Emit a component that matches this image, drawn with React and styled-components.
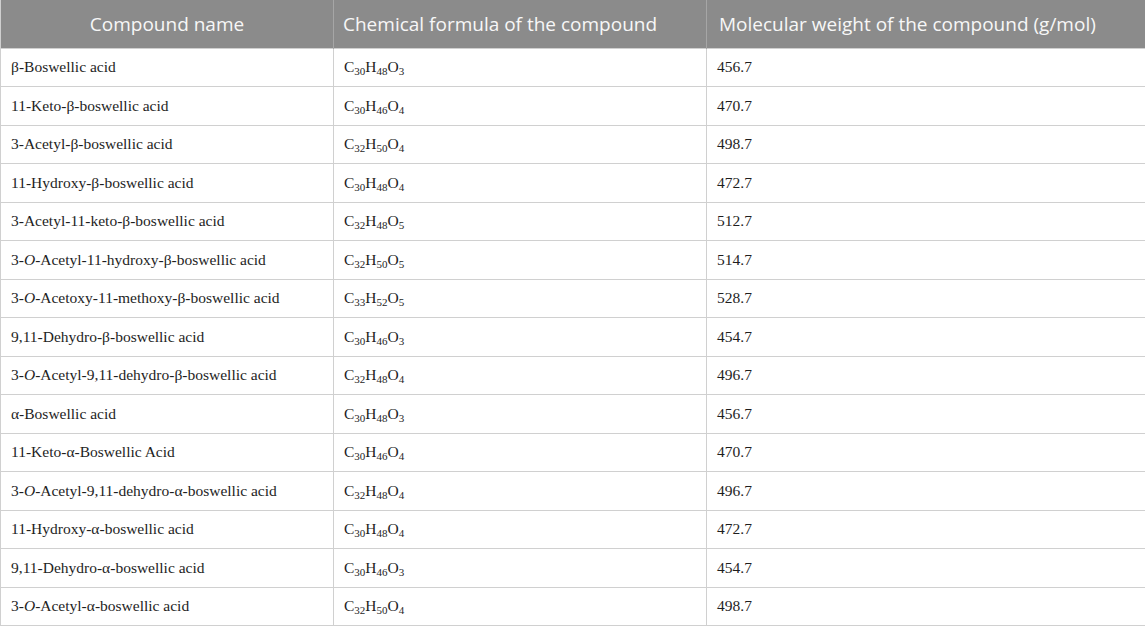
import React from "react";
import styled, { createGlobalStyle } from "styled-components";

const Global = createGlobalStyle`
  html, body { margin: 0; padding: 0; background: #fff; }
`;

const Table = styled.table`
  width: 1145px;
  border-collapse: collapse;
  table-layout: fixed;
  border: 1px solid #cfcfcf;
  border-top: none;
`;

const HeadCell = styled.th`
  height: 48px;
  padding: 0 ${(p) => p.$pad || 10}px;
  background: #8b8b8b;
  color: #f7f7f7;
  font-family: "Open Sans", "Noto Sans", sans-serif;
  font-weight: 400;
  font-size: 19px;
  text-align: ${(p) => p.$align || "left"};
  white-space: nowrap;
  border-left: 1px solid #a6a6a6;
  box-sizing: border-box;
  &:first-child { border-left: none; }
`;

const Cell = styled.td`
  height: 38.5px;
  padding: 0 10px;
  font-family: "Liberation Serif", "Times New Roman", serif;
  font-size: 15.5px;
  color: #1e1e1e;
  border: 1px solid #d0d0d0;
  box-sizing: border-box;
  vertical-align: middle;
`;

const Sub = styled.sub`
  font-size: 11px;
  vertical-align: -3px;
  line-height: 0;
`;

const Formula = ({ f }) => {
  const parts = f.match(/[A-Z][a-z]?\d*/g);
  return (
    <span>
      {parts.map((p, i) => {
        const m = p.match(/([A-Z][a-z]?)(\d*)/);
        return (
          <React.Fragment key={i}>
            {m[1]}
            {m[2] && <Sub>{m[2]}</Sub>}
          </React.Fragment>
        );
      })}
    </span>
  );
};

const rows = [
  [["β-Boswellic acid"], "C30H48O3", "456.7"],
  [["11-Keto-β-boswellic acid"], "C30H46O4", "470.7"],
  [["3-Acetyl-β-boswellic acid"], "C32H50O4", "498.7"],
  [["11-Hydroxy-β-boswellic acid"], "C30H48O4", "472.7"],
  [["3-Acetyl-11-keto-β-boswellic acid"], "C32H48O5", "512.7"],
  [["3-", "O", "-Acetyl-11-hydroxy-β-boswellic acid"], "C32H50O5", "514.7"],
  [["3-", "O", "-Acetoxy-11-methoxy-β-boswellic acid"], "C33H52O5", "528.7"],
  [["9,11-Dehydro-β-boswellic acid"], "C30H46O3", "454.7"],
  [["3-", "O", "-Acetyl-9,11-dehydro-β-boswellic acid"], "C32H48O4", "496.7"],
  [["α-Boswellic acid"], "C30H48O3", "456.7"],
  [["11-Keto-α-Boswellic Acid"], "C30H46O4", "470.7"],
  [["3-", "O", "-Acetyl-9,11-dehydro-α-boswellic acid"], "C32H48O4", "496.7"],
  [["11-Hydroxy-α-boswellic acid"], "C30H48O4", "472.7"],
  [["9,11-Dehydro-α-boswellic acid"], "C30H46O3", "454.7"],
  [["3-", "O", "-Acetyl-α-boswellic acid"], "C32H50O4", "498.7"],
];

const Name = ({ parts }) => (
  <>
    {parts.map((p, i) => (i === 1 ? <i key={i}>{p}</i> : <React.Fragment key={i}>{p}</React.Fragment>))}
  </>
);

export default function App() {
  return (
    <>
      <Global />
      <Table>
        <colgroup>
          <col style={{ width: 333 }} />
          <col style={{ width: 373 }} />
          <col style={{ width: 439 }} />
        </colgroup>
        <thead>
          <tr>
            <HeadCell $align="center">Compound name</HeadCell>
            <HeadCell $pad={9}>Chemical formula of the compound</HeadCell>
            <HeadCell $pad={12}>Molecular weight of the compound (g/mol)</HeadCell>
          </tr>
        </thead>
        <tbody>
          {rows.map((r, i) => (
            <tr key={i}>
              <Cell><Name parts={r[0]} /></Cell>
              <Cell><Formula f={r[1]} /></Cell>
              <Cell>{r[2]}</Cell>
            </tr>
          ))}
        </tbody>
      </Table>
    </>
  );
}
